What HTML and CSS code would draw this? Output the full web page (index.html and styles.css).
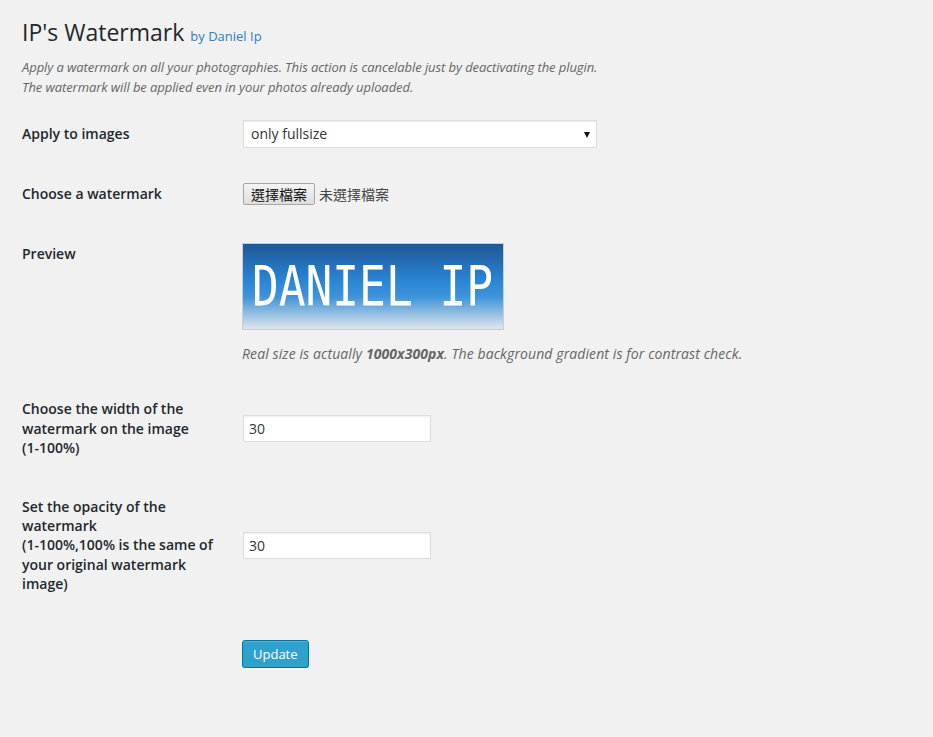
FILE: index.html
```html
<!DOCTYPE html>
<html lang="en">
<head>
<meta charset="utf-8">
<title>IP's Watermark</title>
<link rel="stylesheet" href="styles.css">
</head>
<body>
<div class="wrap">
  <h1 class="title">IP's Watermark <a class="author" href="#">by Daniel Ip</a></h1>
  <p class="intro">Apply a watermark on all your photographies. This action is cancelable just by deactivating the plugin.<br>The watermark will be applied even in your photos already uploaded.</p>
  <table class="form-table">
    <tr class="row-short">
      <th>Apply to images</th>
      <td>
        <span class="select-wrap">
          <select class="select"><option>only fullsize</option></select>
        </span>
      </td>
    </tr>
    <tr class="row-short">
      <th>Choose a watermark</th>
      <td><button class="file-btn" type="button">選擇檔案</button><span class="file-status">未選擇檔案</span></td>
    </tr>
    <tr class="row-short">
      <th>Preview</th>
      <td>
        <div class="preview">
          <svg class="preview-svg" width="260" height="85" viewBox="0 0 260 85" xmlns="http://www.w3.org/2000/svg">
            <defs>
              <linearGradient id="bg" x1="0" y1="0" x2="0" y2="1">
                <stop offset="0" stop-color="#1f5796"/>
                <stop offset="0.45" stop-color="#2a87d7"/>
                <stop offset="0.62" stop-color="#3f93d8"/>
                <stop offset="1" stop-color="#dfe6ec"/>
              </linearGradient>
            </defs>
            <rect width="260" height="85" fill="url(#bg)"/>
            <text x="9" y="61" font-family="DejaVu Sans Mono, monospace" font-size="56" fill="#ffffff" textLength="241" lengthAdjust="spacingAndGlyphs">DANIEL IP</text>
          </svg>
        </div>
        <p class="caption">Real size is actually <strong>1000x300px</strong>. The background gradient is for contrast check.</p>
      </td>
    </tr>
    <tr>
      <th>Choose the width of the watermark on the image <span class="nowrap">(1-100%)</span></th>
      <td><input class="text-input" type="text" value="30"></td>
    </tr>
    <tr>
      <th>Set the opacity of the watermark<br>(1-100%,100% is the same of your original watermark image)</th>
      <td><input class="text-input" type="text" value="30"></td>
    </tr>
  </table>
  <p class="submit"><button class="button-primary" type="button">Update</button></p>
</div>
</body>
</html>
```

FILE: styles.css
```css
html, body {
  margin: 0;
  padding: 0;
  background: #f1f1f1;
}

body {
  font-family: "Open Sans", "Noto Sans", sans-serif;
  color: #444;
  font-size: 13px;
}

.wrap {
  padding: 18px 22px 0 22px;
}

.title {
  margin: 0;
  font-size: 23px;
  font-weight: 400;
  line-height: 29px;
  color: #23282d;
}

.author {
  font-size: 13px;
  color: #2f7fc2;
  text-decoration: none;
}

.intro {
  margin: 7px 0 0;
  font-size: 13px;
  line-height: 19.5px;
  font-style: italic;
  letter-spacing: -0.08px;
  color: #666;
}

.form-table {
  border-collapse: collapse;
  margin-top: 7px;
  width: 100%;
}

.form-table th {
  width: 200px;
  padding: 20px 10px 20px 0;
  text-align: left;
  vertical-align: top;
  font-size: 14px;
  font-weight: 600;
  line-height: 19.2px;
  color: #23282d;
}

.row-short th {
  padding-bottom: 21px;
}

.nowrap {
  white-space: nowrap;
}

.form-table td {
  padding: 15px 10px;
  vertical-align: middle;
  font-size: 14px;
  line-height: 1.3;
}

.select-wrap {
  position: relative;
  display: inline-block;
  vertical-align: middle;
}

.select-wrap::after {
  content: "";
  position: absolute;
  right: 7px;
  top: 12px;
  width: 0;
  height: 0;
  border-left: 3px solid transparent;
  border-right: 3px solid transparent;
  border-top: 6px solid #111;
  pointer-events: none;
}

.select {
  -webkit-appearance: none;
  appearance: none;
  display: block;
  box-sizing: border-box;
  width: 354px;
  height: 28px;
  margin: 0 0 0 1px;
  padding: 0 20px 0 7px;
  border: 1px solid #ddd;
  border-radius: 0;
  background: #fff;
  box-shadow: inset 0 1px 2px rgba(0, 0, 0, 0.07);
  font-family: "Open Sans", "Noto Sans", sans-serif;
  font-size: 14px;
  color: #333;
  line-height: 26px;
}

.file-btn {
  box-sizing: border-box;
  height: 22px;
  width: 72px;
  margin: 0 0 0 1px;
  padding: 0;
  border: 1px solid #a6a6a6;
  border-radius: 2px;
  background: linear-gradient(#f4f4f4, #dedede);
  font-family: "Noto Sans CJK TC", "Noto Sans CJK SC", sans-serif;
  font-size: 14px;
  line-height: 20px;
  color: #111;
  vertical-align: middle;
}

.file-status {
  margin-left: 4px;
  font-family: "Noto Sans CJK TC", "Noto Sans CJK SC", sans-serif;
  font-size: 14px;
  color: #444;
  vertical-align: middle;
}

.preview {
  margin-top: 4px;
  width: 260px;
  height: 85px;
  border: 1px solid #ccc;
}

.preview-svg {
  display: block;
}

.caption {
  margin: 13px 0 0;
  font-size: 14px;
  line-height: 21px;
  font-style: italic;
  letter-spacing: 0.1px;
  color: #666;
}

.caption strong {
  font-weight: 700;
}

.text-input {
  box-sizing: border-box;
  width: 188px;
  height: 27px;
  margin: 0 0 0 1px;
  padding: 0 5px;
  border: 1px solid #ddd;
  background: #fff;
  box-shadow: inset 0 1px 2px rgba(0, 0, 0, 0.07);
  font-family: "Open Sans", "Noto Sans", sans-serif;
  font-size: 14px;
  color: #333;
  vertical-align: middle;
}

.submit {
  margin: 27px 0 0 220px;
  padding: 0;
}

.button-primary {
  box-sizing: border-box;
  height: 28px;
  padding: 0 10px;
  border: 1px solid #0074a2;
  border-radius: 3px;
  background: #2ea2cc;
  box-shadow: inset 0 1px 0 rgba(120, 200, 230, 0.5), 0 1px 0 rgba(0, 0, 0, 0.15);
  font-family: "Open Sans", "Noto Sans", sans-serif;
  font-size: 13px;
  line-height: 26px;
  color: #fff;
}
```
